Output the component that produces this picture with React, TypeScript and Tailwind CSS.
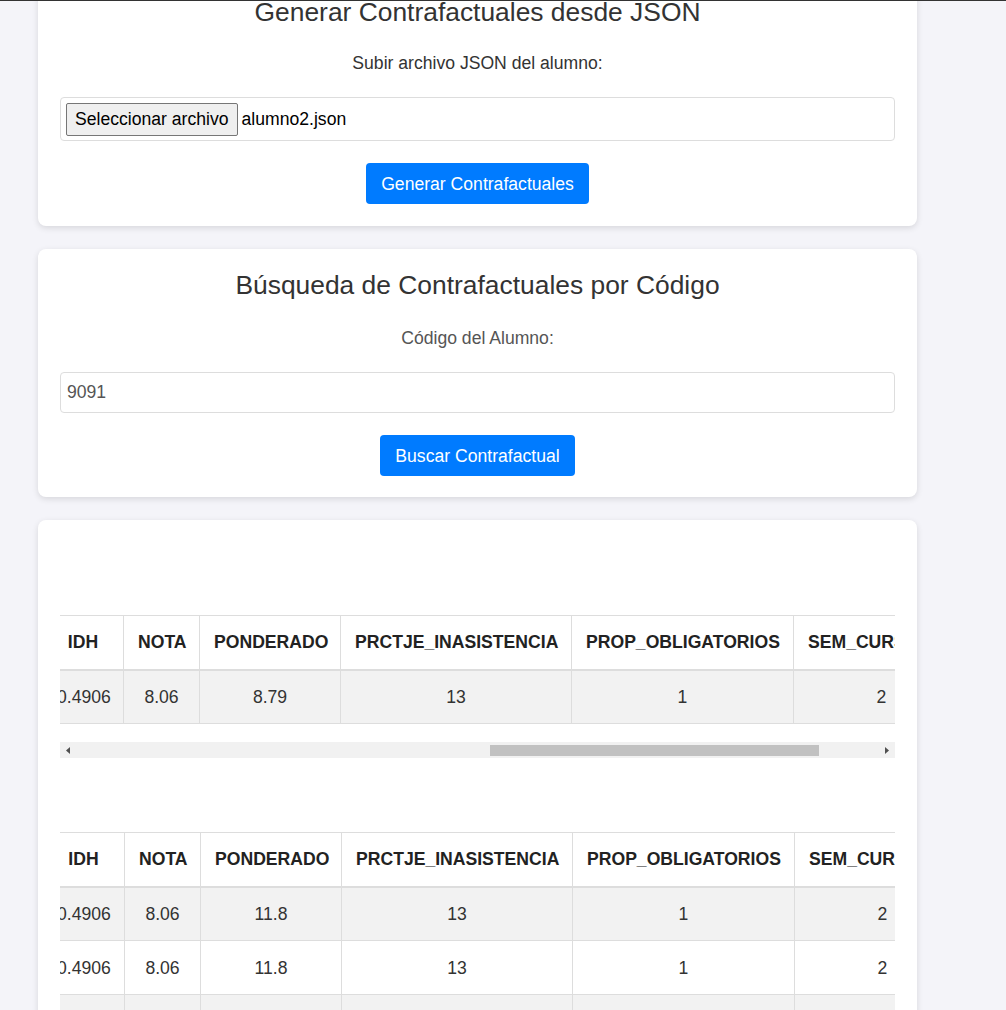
import React from "react";

const font = { fontFamily: '"Liberation Sans", Arial, sans-serif' };

type Col = { key: string; label: string; width: string };

const cols1: Col[] = [
  { key: "idh", label: "IDH", width: "w-[81px]" },
  { key: "nota", label: "NOTA", width: "w-[76px]" },
  { key: "pond", label: "PONDERADO", width: "w-[141px]" },
  { key: "inas", label: "PRCTJE_INASISTENCIA", width: "w-[231px]" },
  { key: "prop", label: "PROP_OBLIGATORIOS", width: "w-[222px]" },
  { key: "sem", label: "SEM_CURSADOS", width: "w-[176px]" },
];

const cols2: Col[] = [
  { key: "idh", label: "IDH", width: "w-[82px]" },
  { key: "nota", label: "NOTA", width: "w-[76px]" },
  { key: "pond", label: "PONDERADO", width: "w-[141px]" },
  { key: "inas", label: "PRCTJE_INASISTENCIA", width: "w-[231px]" },
  { key: "prop", label: "PROP_OBLIGATORIOS", width: "w-[222px]" },
  { key: "sem", label: "SEM_CURSADOS", width: "w-[176px]" },
];

const rows1 = [["0.4906", "8.06", "8.79", "13", "1", "2"]];
const rows2 = [
  ["0.4906", "8.06", "11.8", "13", "1", "2"],
  ["0.4906", "8.06", "11.8", "13", "1", "2"],
  ["0.4906", "8.06", "11.8", "13", "1", "2"],
];

function DataTable({ cols, rows }: { cols: Col[]; rows: string[][] }) {
  return (
    <div className="w-full overflow-hidden">
      <table className="-ml-[18px] border-collapse table-fixed w-[928px] text-[17.6px]">
        <thead>
          <tr className="bg-white">
            {cols.map((c) => (
              <th
                key={c.key}
                className={`${c.width} h-[54px] px-[14px] border border-[#dddddd] border-b-2 border-b-[#dddddd] font-bold text-[#222] text-center whitespace-nowrap leading-[20px]`}
              >
                {c.label}
              </th>
            ))}
          </tr>
        </thead>
        <tbody>
          {rows.map((r, i) => (
            <tr key={i} className={i % 2 === 0 ? "bg-[#f2f2f2]" : "bg-white"}>
              {r.map((v, j) => (
                <td
                  key={j}
                  className="h-[54px] px-[14px] border border-[#dddddd] text-[#333] text-center leading-[20px] whitespace-nowrap"
                >
                  {v}
                </td>
              ))}
            </tr>
          ))}
        </tbody>
      </table>
    </div>
  );
}

function FakeScrollbar() {
  return (
    <div className="flex items-center h-[16px] bg-[#f1f1f1] w-full">
      <div className="w-[16px] h-[16px] flex items-center justify-center">
        <svg width="4" height="7" viewBox="0 0 4 7">
          <path d="M4 0 L0 3.5 L4 7 Z" fill="#505050" />
        </svg>
      </div>
      <div className="flex-1 flex items-center">
        <div className="ml-[414px] w-[329px] h-[11px] bg-[#c1c1c1]" />
      </div>
      <div className="w-[16px] h-[16px] flex items-center justify-center">
        <svg width="4" height="7" viewBox="0 0 4 7">
          <path d="M0 0 L4 3.5 L0 7 Z" fill="#505050" />
        </svg>
      </div>
    </div>
  );
}

function Card({ children, className = "" }: { children: React.ReactNode; className?: string }) {
  return (
    <section
      className={`w-[879px] bg-white rounded-lg shadow-[0_2px_6px_rgba(0,0,0,0.12)] px-[22px] ${className}`}
    >
      {children}
    </section>
  );
}

function BlueButton({ label }: { label: string }) {
  return (
    <button className="h-[41px] px-[15px] bg-[#007bff] text-white text-[17.6px] rounded-[4px] leading-[20px]">
      {label}
    </button>
  );
}

export default function App() {
  return (
    <div className="min-h-[1010px] bg-[#f4f4f9] text-[#333]" style={font}>
      <div className="h-px bg-[#333]" />
      <div className="h-[1009px] overflow-hidden">
        <div className="-mt-[25px] pl-[38px] flex flex-col gap-[23px]">
          {/* Upload JSON */}
          <Card className="pt-[22px] pb-[22px]">
            <h2 className="text-[26.4px] leading-[28px] text-center text-[#333]">
              Generar Contrafactuales desde JSON
            </h2>
            <p className="mt-[27px] text-center text-[17.6px] leading-[20px] text-[#333]">
              Subir archivo JSON del alumno:
            </p>
            <div className="mt-[24px] h-[44px] border border-[#dddddd] rounded-[4px] flex items-center px-[5px] gap-[4px]">
              <span className="h-[33px] px-[8px] flex items-center bg-[#efefef] border border-[#767676] rounded-[2px] text-[17.6px] text-black">
                Seleccionar archivo
              </span>
              <span className="text-[17.6px] text-black">alumno2.json</span>
            </div>
            <div className="mt-[22px] flex justify-center">
              <BlueButton label="Generar Contrafactuales" />
            </div>
          </Card>

          {/* Search by code */}
          <Card className="pt-[22px] pb-[21px]">
            <h2 className="text-[26.4px] leading-[28px] text-center text-[#333]">
              Búsqueda de Contrafactuales por Código
            </h2>
            <p className="mt-[29px] text-center text-[17.6px] leading-[20px] text-[#555]">
              Código del Alumno:
            </p>
            <div className="mt-[24px] h-[41px] border border-[#dddddd] rounded-[4px] flex items-center px-[6px] text-[17.6px] text-[#555]">
              9091
            </div>
            <div className="mt-[22px] flex justify-center">
              <BlueButton label="Buscar Contrafactual" />
            </div>
          </Card>

          {/* Results */}
          <Card className="pt-[95px] pb-[40px]">
            <DataTable cols={cols1} rows={rows1} />
            <div className="mt-[18px]">
              <FakeScrollbar />
            </div>
            <div className="mt-[74px]">
              <DataTable cols={cols2} rows={rows2} />
            </div>
          </Card>
        </div>
      </div>
    </div>
  );
}
